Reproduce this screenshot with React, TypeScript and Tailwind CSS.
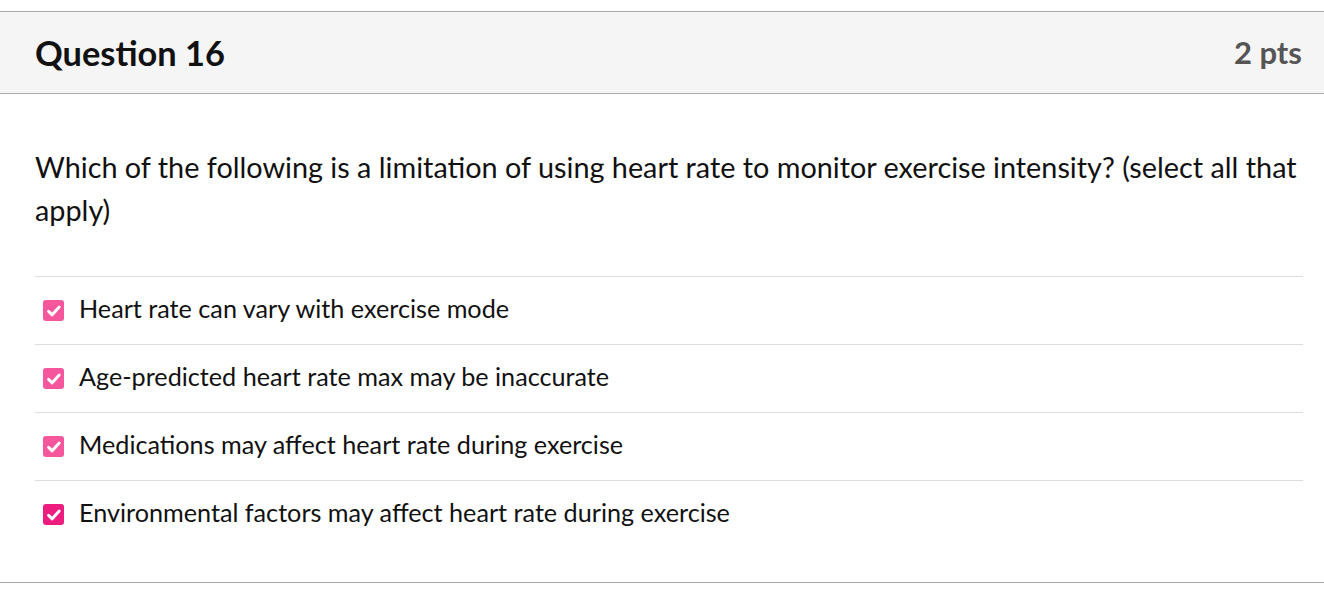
import React from "react";

const answers = [
  { text: "Heart rate can vary with exercise mode", color: "bg-[#f5569c]" },
  { text: "Age-predicted heart rate max may be inaccurate", color: "bg-[#f5569c]" },
  { text: "Medications may affect heart rate during exercise", color: "bg-[#f5569c]" },
  { text: "Environmental factors may affect heart rate during exercise", color: "bg-[#ee1c7e]" },
];

const CheckBox = ({ color }: { color: string }) => (
  <div className={`w-[21px] h-[21px] rounded-[3px] flex items-center justify-center shrink-0 ${color}`}>
    <svg width="16" height="16" viewBox="0 0 16 16" fill="none">
      <path d="M2.6 8.4 L6.2 11.8 L13.2 4" stroke="white" strokeWidth="3" strokeLinecap="round" strokeLinejoin="round" />
    </svg>
  </div>
);

const App = () => {
  return (
    <div className="w-[1324px] h-[592px] bg-white pt-[11px]" style={{ fontFamily: "Lato, 'Open Sans', sans-serif" }}>
      <div className="border-t border-b border-[#aaaaaa]">
        <div className="h-[82px] bg-[#f5f5f5] border-b border-[#aaaaaa] flex items-center justify-between pl-[35px] pr-[22px]">
          <div className="text-[34.4px] font-bold text-[#111]">Question 16</div>
          <div className="text-[31px] font-bold text-[#555]">2 pts</div>
        </div>
        <div className="pl-[35px] pr-[21px] pt-[52px] pb-[34px]">
          <div className="text-[28.8px] leading-[43px] text-[#111] mb-[44px] -mr-[10px]">
            Which of the following is a limitation of using heart rate to monitor exercise intensity? (select all that apply)
          </div>
          <div>
            {answers.map((a, i) => (
              <div key={i} className="h-[68px] border-t border-[#dddddd] flex items-center gap-[15px] pl-[8px]">
                <CheckBox color={a.color} />
                <div className="text-[25.2px] text-[#111] pb-[3px]">{a.text}</div>
              </div>
            ))}
          </div>
        </div>
      </div>
    </div>
  );
};

export default App;
